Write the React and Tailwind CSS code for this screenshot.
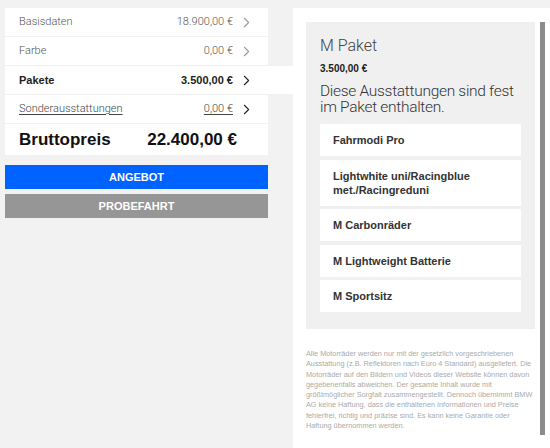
import { ChevronRight } from "lucide-react";

// ── Price summary rows ────────────────────────────────────────────────────────
const rows = [
  { label: "Basisdaten", value: "18.900,00 €", tone: "plain" },
  { label: "Farbe", value: "0,00 €", tone: "plain" },
  { label: "Pakete", value: "3.500,00 €", tone: "active" },
  { label: "Sonderausstattungen", value: "0,00 €", tone: "link" },
];

const items = [
  "Fahrmodi Pro",
  "Lightwhite uni/Racingblue met./Racingreduni",
  "M Carbonräder",
  "M Lightweight Batterie",
  "M Sportsitz",
];

const light = { fontFamily: 'Roboto, "Liberation Sans", sans-serif' };

function Row({ label, value, tone }) {
  const active = tone === "active";
  const link = tone === "link";
  const txt = active
    ? "font-bold text-[#222]"
    : link
    ? "font-light text-[#444] underline underline-offset-2"
    : "font-light text-[#555]";
  return (
    <div
      className={
        "flex h-[28px] items-center bg-white pl-[14px] pr-[13px] text-[11px] " +
        (active ? "-mr-[25px] pr-[38px]" : "")
      }
    >
      <span className={txt} style={active ? undefined : light}>
        {label}
      </span>
      <span className={"ml-auto " + txt} style={active ? undefined : light}>
        {value}
      </span>
      <ChevronRight
        size={17}
        strokeWidth={1.5}
        className={"ml-[5px] " + (tone === "plain" ? "text-[#999]" : "text-[#222]")}
      />
    </div>
  );
}

export default function App() {
  return (
    <div
      className="flex h-[448px] w-[550px] gap-[25px] overflow-hidden bg-[#f2f2f2] pl-[5px] pt-[8px]"
      style={{ fontFamily: '"Liberation Sans", Arial, sans-serif' }}
    >
      {/* ── Left column: price summary + actions ───────────────────── */}
      <div className="flex w-[263px] shrink-0 flex-col">
        <div className="flex flex-col gap-[1px]">
          {rows.map((r) => (
            <Row key={r.label} {...r} />
          ))}
          <div className="flex h-[31px] items-center bg-white pl-[14px] pr-[31px] text-[17px] font-bold text-[#111]">
            <span>Bruttopreis</span>
            <span className="ml-auto">22.400,00 €</span>
          </div>
        </div>

        <button className="mt-[10px] h-[24px] w-full bg-[#0062ff] text-[11px] font-bold text-white">
          ANGEBOT
        </button>
        <button className="mt-[5px] h-[24px] w-full bg-[#969696] text-[11px] font-bold text-white">
          PROBEFAHRT
        </button>
      </div>

      {/* ── Right column: package details ──────────────────────────── */}
      <div className="flex flex-1 bg-white pl-[13px] pt-[14px]">
        <div className="flex w-[229px] shrink-0 flex-col">
          <div className="flex flex-col bg-[#f0f0f0] px-[14px] pb-[17px] pt-[14px]">
            <div className="text-[16px] font-light leading-[20px] text-[#444]" style={light}>
              M Paket
            </div>
            <div className="mt-[5px] text-[10px] font-bold text-[#222]">3.500,00 €</div>
            <div
              className="mt-[7px] text-[15.5px] font-light leading-[16px] tracking-[-0.3px] text-[#333]"
              style={light}
            >
              Diese Ausstattungen sind fest im Paket enthalten.
            </div>
            <div className="mt-[9px] flex flex-col gap-[3.5px]">
              {items.map((it) => (
                <div
                  key={it}
                  className="flex min-h-[32px] items-center bg-white py-[9px] pl-[13px] pr-[10px] text-[11px] font-bold leading-[14px] text-[#333]"
                >
                  {it}
                </div>
              ))}
            </div>
          </div>

          <p className="mt-[20px] text-[7.3px] leading-[10.3px] text-[#aaaaaa]">
            Alle Motorräder werden nur mit der gesetzlich vorgeschriebenen
            Ausstattung (z.B. Reflektoren nach Euro 4 Standard) ausgeliefert. Die
            Motorräder auf den Bildern und Videos dieser Website können davon
            gegebenenfalls abweichen. Der gesamte Inhalt wurde mit
            größtmöglicher Sorgfalt zusammengestellt. Dennoch übernimmt BMW AG
            keine Haftung, dass die enthaltenen Informationen und Preise
            fehlerfrei, richtig und präzise sind. Es kann keine Garantie oder
            Haftung übernommen werden.
          </p>
        </div>

        {/* fake scrollbar */}
        <div className="ml-[5px] h-[413px] w-[5px] bg-[#8c8c8c]" />
      </div>
    </div>
  );
}
